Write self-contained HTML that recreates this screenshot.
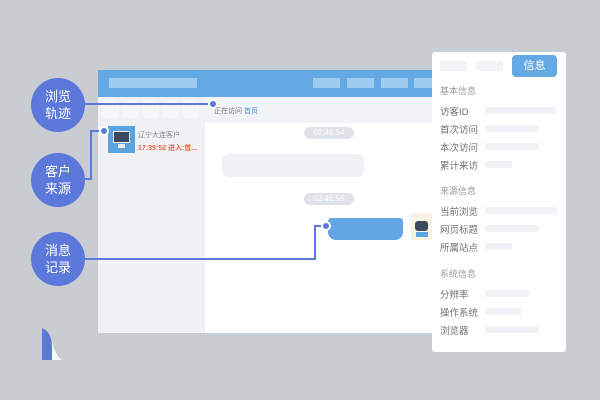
<!DOCTYPE html><html><head><meta charset="utf-8"><style>
*{margin:0;padding:0;box-sizing:border-box}
body{width:600px;height:400px;background:#c9ccd0;position:relative;overflow:hidden;font-family:"Liberation Sans","Noto Sans CJK SC",sans-serif}
.a{position:absolute}
.c{position:absolute;width:54px;height:54px;border-radius:50%;background:#5b78da;color:#fff;font-size:13px;line-height:17px;text-align:center;padding-top:10px}
.l{position:absolute;background:#5b78da}
.d{position:absolute;width:10px;height:10px;border-radius:50%;background:#5b78da;border:2px solid #fff}
.pl{position:absolute;left:440px;font-size:9.5px;color:#707070}
.pb{position:absolute;height:7px;background:#f1f2f5;border-radius:2px}
.ph{position:absolute;left:440px;font-size:9px;color:#9a9a9a}
</style></head><body>
<div class="a" style="left:98px;top:70px;width:340px;height:263px;background:#fff"></div>
<div class="a" style="left:98px;top:70px;width:340px;height:27px;background:#64a9e4"></div>
<div class="a" style="left:109px;top:78px;width:88px;height:10px;background:#a0cbf1"></div>
<div class="a" style="left:313px;top:78px;width:27px;height:10px;background:#a0cbf1"></div>
<div class="a" style="left:347px;top:78px;width:27px;height:10px;background:#a0cbf1"></div>
<div class="a" style="left:381px;top:78px;width:27px;height:10px;background:#a0cbf1"></div>
<div class="a" style="left:414px;top:78px;width:20px;height:10px;background:#a0cbf1"></div>
<div class="a" style="left:98px;top:97px;width:107px;height:236px;background:#eff1f5"></div>
<div class="a" style="left:205px;top:97px;width:233px;height:26px;background:#f2f3f6"></div>
<div class="a" style="left:102px;top:101px;width:17px;height:17px;background:#f6f7f9;border-radius:3px"></div>
<div class="a" style="left:122px;top:101px;width:17px;height:17px;background:#f6f7f9;border-radius:3px"></div>
<div class="a" style="left:142px;top:101px;width:17px;height:17px;background:#f6f7f9;border-radius:3px"></div>
<div class="a" style="left:162px;top:101px;width:17px;height:17px;background:#f6f7f9;border-radius:3px"></div>
<div class="a" style="left:182px;top:101px;width:17px;height:17px;background:#f6f7f9;border-radius:3px"></div>
<div class="a" style="left:214px;top:106px;font-size:7px;color:#777">正在访问 <span style="color:#4a90d9">首页</span></div>
<div class="a" style="left:108px;top:126px;width:27px;height:27px;background:#5aa4e0"></div>
<div class="a" style="left:113px;top:131px;width:17px;height:12px;background:#3d4a5c;border:1.5px solid #eee"></div>
<div class="a" style="left:118px;top:144px;width:7px;height:4px;background:#eee"></div>
<div class="a" style="left:138px;top:130px;font-size:7px;color:#888">辽宁大连客户</div>
<div class="a" style="left:138px;top:143px;font-size:7px;color:#ec6a3e;font-weight:bold">17:39:52 进入:首...</div>
<div class="a" style="left:304px;top:127px;width:50px;height:12px;border-radius:6px;background:#dfe3e8;color:#fff;font-size:8px;text-align:center;line-height:12px">02:46:54</div>
<div class="a" style="left:222px;top:154px;width:142px;height:23px;border-radius:7px;background:#eff1f5"></div>
<div class="a" style="left:304px;top:193px;width:50px;height:12px;border-radius:6px;background:#dfe3e8;color:#fff;font-size:8px;text-align:center;line-height:12px">02:46:55</div>
<div class="a" style="left:328px;top:218px;width:75px;height:22px;border-radius:3px 3px 8px 8px;background:#62a7e4"></div>
<div class="a" style="left:411px;top:213px;width:22px;height:27px;background:#f7f3e3"></div>
<div class="a" style="left:415px;top:221px;width:13px;height:10px;border-radius:3px;background:#3d4a5c"></div>
<div class="a" style="left:416px;top:232px;width:12px;height:5px;background:#5aa4e0"></div>
<div class="a" style="left:432px;top:52px;width:134px;height:300px;background:#fff;border-radius:3px"></div>
<div class="a" style="left:440px;top:61px;width:27px;height:10px;background:#f3f4f6"></div>
<div class="a" style="left:476px;top:61px;width:27px;height:10px;background:#f3f4f6"></div>
<div class="a" style="left:512px;top:55px;width:45px;height:22px;border-radius:4px;background:#65a9e4;color:#fff;font-size:11px;text-align:center;line-height:22px">信息</div>
<div class="ph" style="top:84px">基本信息</div>
<div class="pl" style="top:104px">访客ID</div><div class="pb" style="left:485px;top:107px;width:72px"></div>
<div class="pl" style="top:122px">首次访问</div><div class="pb" style="left:485px;top:125px;width:54px"></div>
<div class="pl" style="top:140px">本次访问</div><div class="pb" style="left:485px;top:143px;width:54px"></div>
<div class="pl" style="top:158px">累计来访</div><div class="pb" style="left:485px;top:161px;width:27px"></div>
<div class="ph" style="top:184px">来源信息</div>
<div class="pl" style="top:204px">当前浏览</div><div class="pb" style="left:485px;top:207px;width:72px"></div>
<div class="pl" style="top:222px">网页标题</div><div class="pb" style="left:485px;top:225px;width:54px"></div>
<div class="pl" style="top:240px">所属站点</div><div class="pb" style="left:485px;top:243px;width:27px"></div>
<div class="ph" style="top:267px">系统信息</div>
<div class="pl" style="top:287px">分辨率</div><div class="pb" style="left:485px;top:290px;width:45px"></div>
<div class="pl" style="top:305px">操作系统</div><div class="pb" style="left:485px;top:308px;width:36px"></div>
<div class="pl" style="top:323px">浏览器</div><div class="pb" style="left:485px;top:326px;width:54px"></div>
<div class="l" style="left:80px;top:103px;width:133px;height:2px"></div>
<div class="l" style="left:80px;top:178px;width:11px;height:2px"></div>
<div class="l" style="left:90px;top:130px;width:2px;height:50px"></div>
<div class="l" style="left:90px;top:130px;width:14px;height:2px"></div>
<div class="l" style="left:80px;top:258px;width:236px;height:2px"></div>
<div class="l" style="left:314px;top:225px;width:2px;height:35px"></div>
<div class="l" style="left:314px;top:225px;width:12px;height:2px"></div>
<div class="d" style="left:208px;top:99px"></div>
<div class="d" style="left:99px;top:126px"></div>
<div class="d" style="left:321px;top:221px"></div>
<div class="c" style="left:31px;top:78px">浏览<br>轨迹</div>
<div class="c" style="left:31px;top:153px">客户<br>来源</div>
<div class="c" style="left:31px;top:232px">消息<br>记录</div>
<svg class="a" style="left:40px;top:326px" width="24" height="36"><path d="M2 2 Q12 6 12 22 L12 34 L2 34Z" fill="#5b78da"/><path d="M12 14 Q14 28 22 34 L12 34Z" fill="#f4f5f7"/></svg>
</body></html>
